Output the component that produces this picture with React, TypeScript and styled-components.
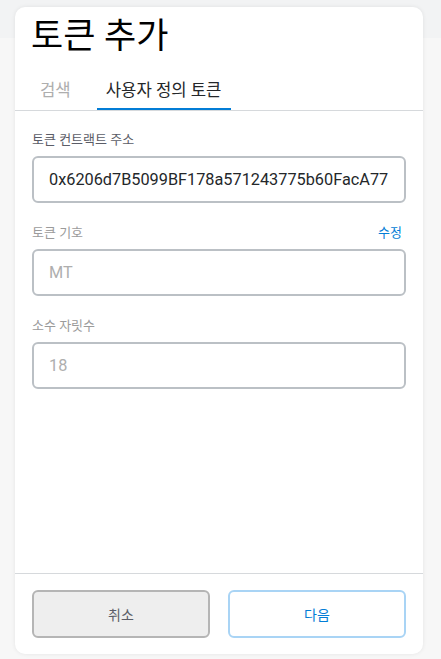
import React from "react";
import styled, { createGlobalStyle } from "styled-components";

const GlobalStyle = createGlobalStyle`
  html, body {
    margin: 0;
    padding: 0;
  }
  body {
    background: linear-gradient(to bottom, #f2f3f4 0, #f2f3f4 38px, #f7f7f7 38px);
    font-family: Roboto, "Noto Sans CJK KR", sans-serif;
    width: 441px;
    height: 659px;
    overflow: hidden;
  }
`;

const Page = styled.div`
  display: flex;
  padding: 7px 18px 5px 15px;
  box-sizing: border-box;
  height: 659px;
`;

const Card = styled.div`
  flex: 1;
  display: flex;
  flex-direction: column;
  background: #ffffff;
  border-radius: 10px;
  box-shadow: 0 0 4px rgba(0, 0, 0, 0.08);
  overflow: hidden;
`;

const Title = styled.h1`
  margin: 0;
  padding: 10px 16px 0;
  font-family: Roboto, "Noto Sans CJK KR", sans-serif;
  font-weight: 400;
  font-size: 35px;
  line-height: 40px;
  color: #000000;
`;

const TabBar = styled.div`
  display: flex;
  gap: 16px;
  padding: 16px 16px 0;
  border-bottom: 1px solid #d6d9dc;
`;

const Tab = styled.div<{ $active?: boolean }>`
  padding: 0 10px 4px 9px;
  height: 31px;
  display: flex;
  align-items: center;
  font-size: 16.7px;
  color: ${(p) => (p.$active ? "#24272a" : "#aeaeae")};
  border-bottom: 2px solid ${(p) => (p.$active ? "#037dd6" : "transparent")};
`;

const Body = styled.div`
  flex: 1;
  display: flex;
  flex-direction: column;
  gap: 22px;
  padding: 21px 17px 0;
`;

const Field = styled.div`
  display: flex;
  flex-direction: column;
  gap: 8px;
`;

const LabelRow = styled.div`
  display: flex;
  justify-content: space-between;
  align-items: center;
  height: 16px;
`;

const Label = styled.label<{ $muted?: boolean }>`
  font-size: 13px;
  line-height: 16px;
  color: ${(p) => (p.$muted ? "#9b9b9b" : "#5b5d67")};
`;

const EditLink = styled.span`
  font-size: 13px;
  line-height: 16px;
  color: #037dd6;
  margin-right: 4px;
  cursor: pointer;
`;

const InputBox = styled.div<{ $disabled?: boolean }>`
  height: 47px;
  box-sizing: border-box;
  border: 2px solid #bbc0c5;
  border-radius: 6px;
  padding: 0 15px;
  display: flex;
  align-items: center;
  font-family: Roboto, "Noto Sans CJK KR", sans-serif;
  font-size: 16.3px;
  color: ${(p) => (p.$disabled ? "#aeaeae" : "#24272a")};
  white-space: nowrap;
  overflow: hidden;
`;

const Footer = styled.div`
  display: flex;
  gap: 18px;
  padding: 16px 17px 16px;
  border-top: 1px solid #d6d9dc;
`;

const Button = styled.button<{ $variant: "default" | "secondary" }>`
  flex: 1;
  height: 48px;
  box-sizing: border-box;
  border-radius: 6px;
  font-family: Roboto, "Noto Sans CJK KR", sans-serif;
  font-size: 14px;
  cursor: pointer;
  border: 2px solid ${(p) => (p.$variant === "default" ? "#b5b5b5" : "#a9d4f5")};
  background: ${(p) => (p.$variant === "default" ? "#eeeeee" : "#ffffff")};
  color: ${(p) => (p.$variant === "default" ? "#5b5d67" : "#037dd6")};
`;

export default function App() {
  return (
    <>
      <GlobalStyle />
      <Page>
        <Card>
          <Title>토큰 추가</Title>
          <TabBar>
            <Tab>검색</Tab>
            <Tab $active>사용자 정의 토큰</Tab>
          </TabBar>
          <Body>
            <Field>
              <LabelRow>
                <Label>토큰 컨트랙트 주소</Label>
              </LabelRow>
              <InputBox>0x6206d7B5099BF178a571243775b60FacA77</InputBox>
            </Field>
            <Field>
              <LabelRow>
                <Label $muted>토큰 기호</Label>
                <EditLink>수정</EditLink>
              </LabelRow>
              <InputBox $disabled>MT</InputBox>
            </Field>
            <Field>
              <LabelRow>
                <Label $muted>소수 자릿수</Label>
              </LabelRow>
              <InputBox $disabled>18</InputBox>
            </Field>
          </Body>
          <Footer>
            <Button $variant="default">취소</Button>
            <Button $variant="secondary">다음</Button>
          </Footer>
        </Card>
      </Page>
    </>
  );
}
